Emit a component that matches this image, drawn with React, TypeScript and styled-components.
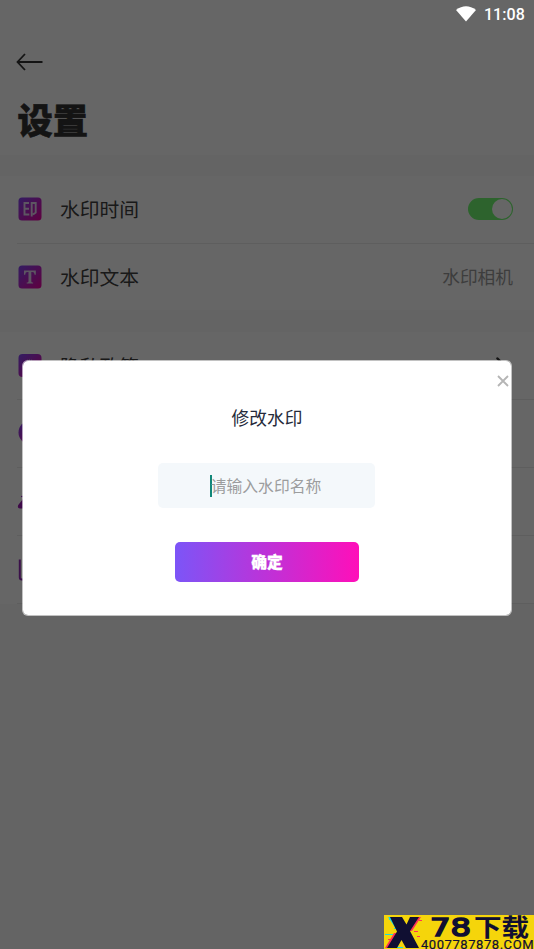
import React from "react";
import styled, { createGlobalStyle } from "styled-components";

const Global = createGlobalStyle`
  * { box-sizing: border-box; }
  html, body { margin: 0; padding: 0; }
  body { width: 534px; height: 949px; overflow: hidden; font-family: Roboto, "Noto Sans CJK SC", sans-serif; }
  button, input { font-family: inherit; }
`;

const Screen = styled.div`
  position: relative;
  width: 534px;
  height: 949px;
  overflow: hidden;
  background: #fafafa;
  color: #333;
`;

const Header = styled.header`
  display: flex;
  flex-direction: column;
  height: 155px;
  background: #fff;
`;

const StatusBar = styled.div`
  display: flex;
  justify-content: flex-end;
  align-items: center;
  gap: 8px;
  height: 28px;
  padding-right: 9px;
  svg { display: block; }
`;

const Clock = styled.span`
  padding-top: 2px;
  font: 500 16px/28px Roboto, sans-serif;
  letter-spacing: 0.1px;
  color: #fff;
`;

const BackButton = styled.button`
  display: flex;
  width: 30px;
  height: 20px;
  margin: 24px 0 0 15px;
  padding: 0;
  border: 0;
  background: none;
`;

const Title = styled.h1`
  margin: 24px 0 0 17.5px;
  font-size: 35.3px;
  line-height: 52px;
  font-weight: 900;
  color: #333;
  -webkit-text-stroke: 0.6px #333;
`;

const Group = styled.section<{ $gap: number }>`
  margin-top: ${(p) => p.$gap}px;
  padding-left: 17px;
  background: #fff;
`;

const Row = styled.div<{ $height: number; $line?: boolean }>`
  display: flex;
  align-items: center;
  height: ${(p) => p.$height}px;
  padding-right: 21px;
  border-bottom: ${(p) => (p.$line ? "1px solid #ececec" : "0")};
  svg { display: block; flex: none; }
`;

const Label = styled.span`
  flex: 1;
  margin-left: 17px;
  padding-top: 4px;
  font-size: 19.8px;
  line-height: 30px;
  color: #404040;
`;

const Value = styled.span`
  padding-top: 3px;
  font-size: 17.7px;
  line-height: 26px;
  color: #999;
`;

const Toggle = styled.span`
  display: flex;
  justify-content: flex-end;
  width: 45px;
  height: 22px;
  padding: 1px;
  border-radius: 11px;
  background: #70f870;
  &::after {
    content: "";
    width: 20px;
    height: 20px;
    border-radius: 50%;
    background: #fff;
  }
`;

const Scrim = styled.div`
  position: absolute;
  inset: 0;
  background: rgba(0, 0, 0, 0.6);
`;

const StatusOverlay = styled.div`
  position: absolute;
  top: 0;
  right: 0;
`;

const Dialog = styled.div`
  position: absolute;
  left: 22px;
  top: 360px;
  width: 490px;
  height: 256px;
  display: flex;
  flex-direction: column;
  align-items: center;
  padding-top: 45px;
  border: 1px solid rgba(255, 255, 255, 0.6);
  border-radius: 6px;
  background: #fff;
  background-clip: padding-box;
`;

const Close = styled.button`
  position: absolute;
  right: 2px;
  top: 14px;
  display: flex;
  padding: 0;
  border: 0;
  background: none;
`;

const DialogTitle = styled.h2`
  margin: 0;
  font-size: 17.7px;
  line-height: 26px;
  font-weight: 400;
  color: #252a3a;
`;

const Field = styled.div`
  display: flex;
  align-items: center;
  justify-content: center;
  width: 217px;
  height: 45px;
  margin: 31px 1px 0 0;
  padding-right: 2px;
  border-radius: 5px;
  background: #f4f8fb;
`;

const Caret = styled.i`
  width: 2px;
  height: 22px;
  margin-right: -1px;
  background: #118779;
`;

const Placeholder = styled.span`
  padding-top: 2px;
  font-size: 15.8px;
  line-height: 24px;
  color: #9c9d9e;
`;

const Confirm = styled.button`
  width: 184px;
  height: 40px;
  margin-top: 34px;
  padding: 2px 0 0;
  border: 0;
  border-radius: 5px;
  background: linear-gradient(90deg, #7c55f7, #ff0fb9);
  color: #fff;
  font-size: 15.8px;
  line-height: 38px;
  font-weight: 900;
  -webkit-text-stroke: 0.3px #fff;
`;

const SiteBadge = styled.div`
  position: absolute;
  right: 0;
  bottom: 0;
  width: 150px;
  height: 34px;
  display: flex;
  overflow: hidden;
  background: #f5d50b;
  svg { display: block; }
`;

const Gradient = ({ id }: { id: string }) => (
  <defs>
    <linearGradient id={id} x1="0" y1="0" x2="1" y2="1">
      <stop stopColor="#8048f4" />
      <stop offset="1" stopColor="#f000a0" />
    </linearGradient>
  </defs>
);

const StampIcon = () => (
  <svg width="26" height="26" viewBox="0 0 26 26">
    <Gradient id="g-stamp" />
    <rect x="1.5" y="1.5" width="23" height="23" rx="3.5" fill="url(#g-stamp)" />
    <path d="M12 7H7.5V18.5H12.3M7.5 12.700H12M14.700 20.500V7H18.700V16.500L16 18.500" fill="none" stroke="#e9d8f4" strokeWidth="1.9" />
  </svg>
);

const TextIcon = () => (
  <svg width="26" height="26" viewBox="0 0 26 26">
    <Gradient id="g-text" />
    <rect x="1.5" y="1.5" width="23" height="23" rx="3.5" fill="url(#g-text)" />
    <path d="M7 6.500h11.800v4.200h-1.200c-.3-1.900-.8-2.600-2.400-2.600h-.9v9.200c0 1 .5 1.200 1.800 1.300v.9H9.700v-.9c1.300-.1 1.800-.3 1.800-1.300V8.100h-.9c-1.600 0-2.100.7-2.400 2.600H7z" fill="#e9d8f4" />
  </svg>
);

const PrivacyIcon = () => (
  <svg width="26" height="26" viewBox="0 0 26 26">
    <Gradient id="g-privacy" />
    <rect x="1.5" y="1" width="23" height="23" rx="4" fill="url(#g-privacy)" />
    <path d="M10.500 8.500V6.500M12.500 8.500V6M14.500 8.500V6.500" stroke="#b890d8" strokeWidth="1" />
  </svg>
);

const InfoIcon = () => (
  <svg width="26" height="26" viewBox="0 0 26 26">
    <Gradient id="g-info" />
    <circle cx="13" cy="12.5" r="11.5" fill="url(#g-info)" />
  </svg>
);

const UserIcon = () => (
  <svg width="26" height="26" viewBox="0 0 26 26">
    <path d="M4 8.500h4" stroke="#a026c8" strokeWidth="1.2" />
    <path d="M.8 18.500C.8 16.500 3 15.500 4 13.500L6 11h14l5 7q-.5 2.500-3 2.500H3q-2.200 0-2.200-2" fill="#9c18b4" />
  </svg>
);

const FileIcon = () => (
  <svg width="26" height="26" viewBox="0 0 26 26">
    <path d="M2.800 3.500V21.500Q2.800 23.500 4.800 23.500H22" fill="none" stroke="#9428b8" strokeWidth="2" />
  </svg>
);

const Chevron = () => (
  <svg width="18" height="18" viewBox="0 0 18 18">
    <path d="m2.500 1.500 7 7.500-7 7.500" fill="none" stroke="#333" strokeWidth="2.5" strokeLinecap="round" />
  </svg>
);

const SiteLogo = () => (
  <svg width="150" height="34" viewBox="0 0 150 34">
    <g fill="#18dce0">
      <path d="M4 2h6l6 12h-4zM31 2h5l-7 11h-4zM18 22l3-2 6 13h-5zM13 24l5-4-5 13H9z" />
      <path d="M5 4h3v1H5zM1 19h8v1H1zM10 13h4v1h-4zM12 32h7v1h-7z" />
    </g>
    <g fill="#ff3157">
      <path d="M13 2h4l4 7-2 2zM10 18h4L5 33H1zM34 2h3l-9 14h-3z" />
      <path d="M35 5h3v1h-3zM30 16h4v1h-4zM33 21h3v1h-3zM4 24h5v1H4z" />
    </g>
    <path d="M6 2h12l4.500 7.500L26 2h9L26 16l9 17H22l-4.500-8-4.500 8H3l10-16.500z" fill="#100f32" />
    <g fill="#100f32" stroke="#100f32">
      <text x="46" y="21.3" fontFamily="DejaVu Sans, sans-serif" fontSize="25" strokeWidth="1.6" textLength="41" lengthAdjust="spacingAndGlyphs">78</text>
      <text x="90" y="20.8" fontFamily="Noto Sans CJK SC, sans-serif" fontWeight="700" fontSize="23.5" strokeWidth=".1" textLength="55" lengthAdjust="spacingAndGlyphs">下载</text>
      <text x="37" y="33.5" fontFamily="Roboto, sans-serif" fontSize="13" strokeWidth=".2" textLength="112.5">4007787878.COM</text>
    </g>
  </svg>
);

export default function App() {
  return (
    <>
      <Global />
      <Screen>
        <Header>
          <StatusBar />
          <BackButton aria-label="返回">
            <svg width="30" height="20" viewBox="0 0 30 20">
              <path d="M10 2 2.500 10 10 18M2.500 10H27.500" fill="none" stroke="#333" strokeWidth="1.8" />
            </svg>
          </BackButton>
          <Title>设置</Title>
        </Header>
        <Group $gap={21}>
          <Row $height={67.5} $line><StampIcon /><Label>水印时间</Label><Toggle /></Row>
          <Row $height={66.5}><TextIcon /><Label>水印文本</Label><Value>水印相机</Value></Row>
        </Group>
        <Group $gap={22}>
          <Row $height={68} $line><PrivacyIcon /><Label>隐私政策</Label><Chevron /></Row>
          <Row $height={67.5} $line><InfoIcon /></Row>
          <Row $height={68} $line><UserIcon /></Row>
          <Row $height={68} $line><FileIcon /></Row>
        </Group>
        <Scrim />
        <StatusOverlay>
          <StatusBar>
            <svg width="20" height="16" viewBox="0 0 20 16">
              <path d="M0 4Q10-3.500 20 4L10 15.500z" fill="#fff" />
            </svg>
            <Clock>11:08</Clock>
          </StatusBar>
        </StatusOverlay>
        <Dialog role="dialog">
          <Close aria-label="关闭">
            <svg width="12" height="12" viewBox="0 0 12 12">
              <path d="m1 1 10 10M11 1 1 11" stroke="#b5b5b5" strokeWidth="1.8" />
            </svg>
          </Close>
          <DialogTitle>修改水印</DialogTitle>
          <Field><Caret /><Placeholder>请输入水印名称</Placeholder></Field>
          <Confirm>确定</Confirm>
        </Dialog>
        <SiteBadge><SiteLogo /></SiteBadge>
      </Screen>
    </>
  );
}
